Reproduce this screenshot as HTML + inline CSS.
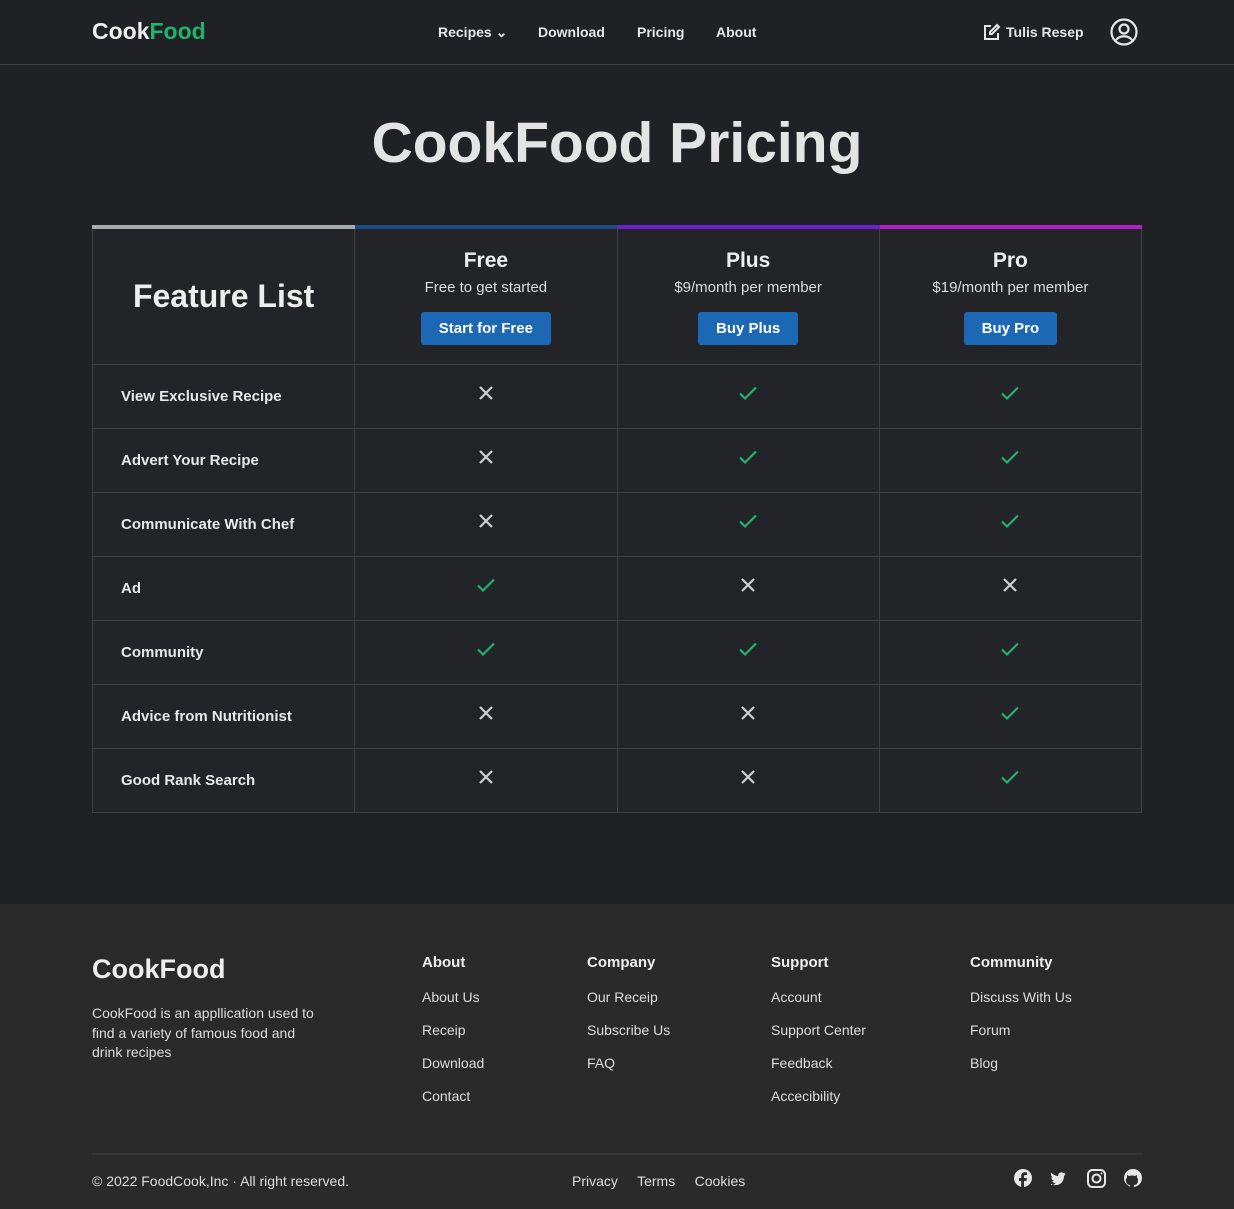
<!DOCTYPE html>
<html><head><style>
*{margin:0;padding:0;box-sizing:border-box}
body{width:1234px;height:1209px;background:#202124;font-family:"Liberation Sans",sans-serif;color:#e8e8e8;position:relative;overflow:hidden}
.hdr{height:65px;border-bottom:1px solid #3c3d40;position:relative}
.abs{position:absolute}
.logo{font-weight:bold;font-size:23px;left:92px;top:18px;color:#eee}
.logo span{color:#1fb36b}
.nav{font-size:14px;font-weight:bold;top:24px;color:#e6e6e6}
h1{position:absolute;top:110px;width:100%;text-align:center;font-size:57px;font-weight:bold;color:#e4e4e4}
table{position:absolute;left:92px;top:225px;width:1050px;border-collapse:collapse;table-layout:fixed}
td{border:1px solid #3f4044;background:#232428;height:64px;text-align:center;font-size:15px;font-weight:bold}
td.f{text-align:left;padding-left:28px}
tr.h td{height:137px;vertical-align:top;padding-top:20px}
.t{font-size:21px;font-weight:bold;color:#eee}
.s{font-size:15px;font-weight:normal;margin-top:6px;color:#ddd}
.b{display:inline-block;background:#1c68b5;color:#fff;font-size:15px;font-weight:bold;padding:8px 18px;border-radius:3px;margin-top:16px}
td svg{display:block;margin:-6px auto 0}
.foot{position:absolute;top:904px;left:0;width:1234px;height:305px;background:#2a2a2b}
.fh{font-size:15px;font-weight:bold;color:#eee}
.fl{font-size:14px;color:#ddd;line-height:33px}
</style></head><body>
<svg width="0" height="0" style="position:absolute"><defs>
<symbol id="x" viewBox="0 0 20 20"><path d="M4 4L16 16M16 4L4 16" stroke="#cfcfcf" stroke-width="2.2" fill="none"/></symbol>
<symbol id="c" viewBox="0 0 20 20"><path d="M2 10.5l5 5L18 4.5" stroke="#1fb36b" stroke-width="2.2" fill="none"/></symbol>
</defs></svg>
<div class="hdr">
<div class="abs logo">Cook<span>Food</span></div>
<div class="abs nav" style="left:438px">Recipes ⌄</div>
<div class="abs nav" style="left:538px">Download</div>
<div class="abs nav" style="left:637px">Pricing</div>
<div class="abs nav" style="left:716px">About</div>
<svg class="abs" style="left:983px;top:23px" width="18" height="18" viewBox="0 0 18 18" fill="none" stroke="#e6e6e6" stroke-width="2"><path d="M8 3H2v13h13v-6"/><path d="M14 2l2 2-7 7H7V9z"/></svg>
<div class="abs nav" style="left:1006px">Tulis Resep</div>
<svg class="abs" style="left:1110px;top:18px" width="28" height="28" viewBox="0 0 28 28" fill="none" stroke="#e6e6e6" stroke-width="2.2"><circle cx="14" cy="14" r="12.5"/><circle cx="14" cy="11" r="4.5"/><path d="M6 22c4-5 12-5 16 0"/></svg>
</div>
<h1>CookFood Pricing</h1>
<table>
<tr class="h">
<td class="f" style="border-top:4px solid #aaa;vertical-align:middle;padding:0;text-align:center"><span style="font-size:32px;font-weight:bold;color:#eee">Feature List</span></td>
<td style="border-top:4px solid #1b4e84"><div class="t">Free</div><div class="s">Free to get started</div><div class="b">Start for Free</div></td>
<td style="border-top:4px solid #6a1fd1"><div class="t">Plus</div><div class="s">$9/month per member</div><div class="b">Buy Plus</div></td>
<td style="border-top:4px solid #b41fc4"><div class="t">Pro</div><div class="s">$19/month per member</div><div class="b">Buy Pro</div></td>
</tr>
<tr><td class="f">View Exclusive Recipe</td><td><svg width="20" height="20"><use href="#x"/></svg></td><td><svg width="20" height="20"><use href="#c"/></svg></td><td><svg width="20" height="20"><use href="#c"/></svg></td></tr>
<tr><td class="f">Advert Your Recipe</td><td><svg width="20" height="20"><use href="#x"/></svg></td><td><svg width="20" height="20"><use href="#c"/></svg></td><td><svg width="20" height="20"><use href="#c"/></svg></td></tr>
<tr><td class="f">Communicate With Chef</td><td><svg width="20" height="20"><use href="#x"/></svg></td><td><svg width="20" height="20"><use href="#c"/></svg></td><td><svg width="20" height="20"><use href="#c"/></svg></td></tr>
<tr><td class="f">Ad</td><td><svg width="20" height="20"><use href="#c"/></svg></td><td><svg width="20" height="20"><use href="#x"/></svg></td><td><svg width="20" height="20"><use href="#x"/></svg></td></tr>
<tr><td class="f">Community</td><td><svg width="20" height="20"><use href="#c"/></svg></td><td><svg width="20" height="20"><use href="#c"/></svg></td><td><svg width="20" height="20"><use href="#c"/></svg></td></tr>
<tr><td class="f">Advice from Nutritionist</td><td><svg width="20" height="20"><use href="#x"/></svg></td><td><svg width="20" height="20"><use href="#x"/></svg></td><td><svg width="20" height="20"><use href="#c"/></svg></td></tr>
<tr><td class="f">Good Rank Search</td><td><svg width="20" height="20"><use href="#x"/></svg></td><td><svg width="20" height="20"><use href="#x"/></svg></td><td><svg width="20" height="20"><use href="#c"/></svg></td></tr>
</table>
<div class="foot">
<div class="abs" style="left:92px;top:50px;font-size:27px;font-weight:bold;color:#eee">CookFood</div>
<div class="abs" style="left:92px;top:100px;font-size:14px;line-height:19.5px;color:#ddd;width:230px">CookFood is an appllication used to find a variety of famous food and drink recipes</div>
<div class="abs" style="left:422px;top:50px"><div class="fh">About</div><div class="fl" style="margin-top:10px">About Us<br>Receip<br>Download<br>Contact</div></div>
<div class="abs" style="left:587px;top:50px"><div class="fh">Company</div><div class="fl" style="margin-top:10px">Our Receip<br>Subscribe Us<br>FAQ</div></div>
<div class="abs" style="left:771px;top:50px"><div class="fh">Support</div><div class="fl" style="margin-top:10px">Account<br>Support Center<br>Feedback<br>Accecibility</div></div>
<div class="abs" style="left:970px;top:50px"><div class="fh">Community</div><div class="fl" style="margin-top:10px">Discuss With Us<br>Forum<br>Blog</div></div>
<div class="abs" style="left:92px;top:249px;width:1051px;height:2px;background:#353536"></div>
<div class="abs" style="left:92px;top:269px;font-size:14px;color:#ddd">© 2022 FoodCook,Inc · All right reserved.</div>
<div class="abs" style="left:572px;top:269px;font-size:14px;color:#ddd">Privacy &nbsp;&nbsp;&nbsp; Terms &nbsp;&nbsp;&nbsp; Cookies</div>
<svg class="abs" style="left:1014px;top:265px" width="130" height="20" viewBox="0 0 130 20">
<circle cx="9" cy="9" r="9" fill="#e6e6e6"/><path d="M10 19v-7h2.5l.4-3H10V7.5c0-.9.3-1.5 1.5-1.5H13V3.4c-.3 0-1.2-.1-2.2-.1-2.2 0-3.6 1.3-3.6 3.7V9H5v3h2.2v7z" fill="#2a2a2b"/>
<path d="M37 15c6 3 13 0 13-8l2-2-2 .5 1.5-2-2.2.8c-2-2-5.5-.5-5 2.7-3 0-5.5-1.5-7-3.5-1 2 0 4 1.5 5-1 0-1.5-.3-1.5-.3 0 2 1.5 3.3 3 3.6-1 .3-1.5.2-2 .1.5 1.5 2 2.5 3.5 2.5-1.5 1.2-3.5 1.8-5 1.6z" fill="#e6e6e6"/>
<rect x="74" y="1" width="17" height="17" rx="4.5" fill="none" stroke="#e6e6e6" stroke-width="2"/><circle cx="82.5" cy="9.5" r="4" fill="none" stroke="#e6e6e6" stroke-width="2"/><circle cx="87.5" cy="4.5" r="1" fill="#e6e6e6"/>
<circle cx="119" cy="9" r="9" fill="#e6e6e6"/><path d="M116 19v-3c-3 0-4-2-4-5 0-1.5 1-2.5 1-2.5l0-2.5 2 1c2-.6 4-.6 6 0l2-1v2.5s1 1 1 2.5c0 3-1 5-4 5v3z" fill="#2a2a2b"/>
</svg>
</div>
</body></html>
